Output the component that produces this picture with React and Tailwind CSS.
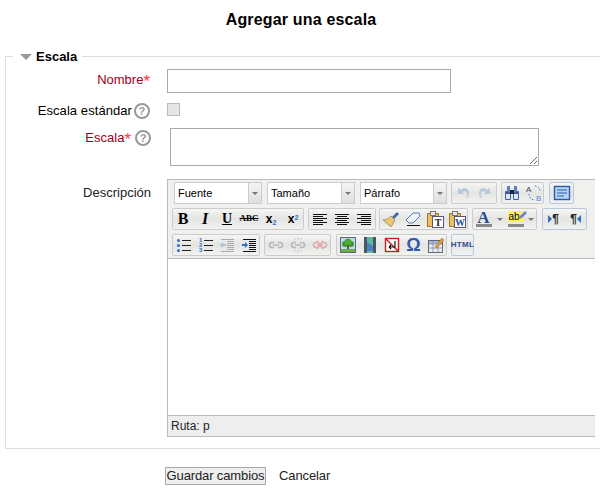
// ─── Agregar una escala form ───────────────────────────────────────────────────
const FONT = "font-['Liberation_Sans',Arial,sans-serif]";
const SERIF = "font-['Liberation_Serif',serif]";

const Help = () => (
  <span className="inline-flex h-4 w-4 shrink-0 items-center justify-center rounded-full border-2 border-[#999] bg-white text-[11px] font-bold leading-none text-[#999]">?</span>
);

const Star = () => <span className="relative top-[3px] text-[17px] leading-[0] text-[#f33]">*</span>;

const Caret = () => <span className="border-x-[3px] border-t-[3px] border-x-transparent border-t-[#777]" />;

const Select = ({ label, cls }) => (
  <div className={`flex h-[22px] border border-[#ccc] bg-white ${cls}`}>
    <span className="flex-1 pl-[3px] text-[11px] leading-[20px] text-black">{label}</span>
    <span className="flex w-[13px] items-center justify-center border-l border-[#ccc] bg-gradient-to-b from-[#f4f4f2] to-[#dfdfdd]">
      <Caret />
    </span>
  </div>
);

const Group = ({ children, cls, blue }) => (
  <div className={`flex h-[22px] shrink-0 items-center justify-center rounded-[2px] border bg-gradient-to-b from-[#f6f6f4] via-[#e4e4e2] to-[#f2f2f0] ${blue ? 'border-[#b8c8e0]' : 'border-[#ccc]'} ${cls}`}>{children}</div>
);

const Btn = ({ children, cls = 'w-[22px]' }) => (
  <div className={`flex h-[20px] shrink-0 items-center justify-center ${cls}`}>{children}</div>
);

const Ico = ({ children }) => <svg width="18" height="18" viewBox="0 0 18 18">{children}</svg>;

const Lines = ({ a }) => (
  <Ico>
    {[3, 5, 7, 9, 11, 13].map((y, i) => {
      const l = i % 2 === 0 ? 14 : 10;
      const x = a === 'left' ? 2 : a === 'center' ? (18 - l) / 2 : 16 - l;
      return <rect key={y} x={x} y={y + 1} width={l} height="1" fill="#111" />;
    })}
  </Ico>
);

const List = ({ num }) => (
  <Ico>
    {[4, 9, 14].map((y, i) => (
      <g key={y}>
        {num
          ? <text x="3" y={y + 2} fontSize="6" fontWeight="bold" fontFamily="Liberation Sans" fill="#2f6fc0">{i + 1}</text>
          : <rect x="3" y={y - 1} width="3" height="3" rx="1.5" fill="#2f6fc0" />}
        <rect x="8" y={y} width="9" height="1" fill="#222" />
      </g>
    ))}
  </Ico>
);

const Indent = ({ dim }) => (
  <Ico>
    {[3, 5, 7, 9, 11, 13, 15].map((y) => (
      <rect key={y} x={y === 3 || y === 15 ? 3 : 9} y={y} width={y === 3 || y === 15 ? 13 : 7} height="1" fill={dim ? '#aaa' : '#111'} />
    ))}
    <path d={dim ? 'M2 9l3-3v2h3v2H5v2z' : 'M8 9 5 6v2H2v2h3v2z'} fill={dim ? '#a8c0dc' : '#2f6fc0'} />
  </Ico>
);

const Link = ({ broken, red }) => (
  <Ico>
    <path d="M7 6.5H5a2.5 2.5 0 0 0 0 5h2M11 6.5h2a2.5 2.5 0 0 1 0 5h-2M6 9h6" fill="none" stroke={red ? '#e0b0b0' : '#b4b8c0'} strokeWidth="1.6" />
    {broken && <path d="M9 1v3M9 14v3M5 2l2 2M13 2l-2 2M5 16l2-2M13 16l-2-2" stroke="#c4c8cc" />}
    {red && <path d="M6 5l6 8M12 5l-6 8" stroke="#e8a0a0" strokeWidth="1.4" />}
  </Ico>
);

const Clip = ({ ch }) => (
  <Ico>
    <rect x="1.5" y="3.5" width="11" height="13" fill="#ecc060" stroke="#9a7a30" />
    <rect x="4.5" y="1.5" width="5" height="4" fill="#e8e8e8" stroke="#777" />
    <rect x="6.5" y="6.5" width="11" height="11" fill="#fff" stroke="#557" />
    <text x="12" y="15.5" textAnchor="middle" fontSize="10" fontWeight="bold" fontFamily="Liberation Serif" fill={ch === 'W' ? '#1f4fa8' : '#222'}>{ch}</text>
  </Ico>
);

export default function App() {
  return (
    <div className={`${FONT} h-[488px] w-[600px] overflow-hidden bg-white text-[13px] text-[#222]`}>
      <h2 className="pl-[2px] pt-[10px] text-center text-[16px] font-bold leading-[19px] tracking-[0.17px] text-black">Agregar una escala</h2>

      <fieldset className="ml-[5px] mt-[20px] h-[400px] w-[620px] border border-[#ddd]">
        <legend className="ml-[7px] flex items-center pl-[7px] pr-[5px] text-[13px] font-bold leading-[15px] text-black">
          <span className="mr-[4px] border-x-[6px] border-t-[6px] border-x-transparent border-t-[#999]" />
          Escala
        </legend>

        {/* Nombre */}
        <div className="mt-[5px] flex">
          <label className="w-[144px] pt-[1px] text-right leading-[19px] text-[#a00018]">Nombre<Star /></label>
          <input className="ml-[17px] h-[24px] w-[284px] border border-[#aaa] bg-white" />
        </div>

        {/* Escala estándar */}
        <div className="mt-[10px] flex h-[16px]">
          <label className="flex w-[144px] items-center justify-end gap-[2px] tracking-[0.07px] text-black">Escala estándar <Help /></label>
          <input type="checkbox" disabled className="ml-[17px] h-[13px] w-[13px] appearance-none border border-[#bbb] bg-[#e6e6e6]" />
        </div>

        {/* Escala */}
        <div className="mt-[9px] flex">
          <label className="mt-[2px] flex h-[16px] w-[145px] items-center justify-end gap-[4px] text-[#a00018]"><span>Escala<Star /></span><Help /></label>
          <textarea className="ml-[19px] h-[38px] w-[369px] border border-[#aaa] bg-white" />
        </div>

        {/* Descripción + editor */}
        <div className="mt-[13px] flex">
          <label className="w-[145px] pt-[4px] text-right">Descripción</label>
          <div className="ml-[16px] flex h-[258px] w-[428px] shrink-0 flex-col border-y border-l border-[#bbb] bg-[#f0f0ee]">
            <div className="flex h-[79px] shrink-0 flex-col gap-[4px] border-b border-[#bbb] pl-[4px] pt-[2px]">
              <div className="flex h-[22px] items-center">
                <Select label="Fuente" cls="ml-[2px] mr-[5px] w-[88px]" />
                <Select label="Tamaño" cls="mr-[5px] w-[88px]" />
                <Select label="Párrafo" cls="mr-[4px] w-[87px]" />
                <Group cls="mr-[4px] w-[46px]">
                  <Btn><Ico><path d="M4 4v6h6L8 8c3-2 6 0 5 4l-1 3c4-3 4-10-1-11-2 0-3 1-4 2z" fill="#b6c8dc" /></Ico></Btn>
                  <Btn><Ico><path d="M14 4v6H8l2-2c-3-2-6 0-5 4l1 3c-4-3-4-10 1-11 2 0 3 1 4 2z" fill="#b6c8dc" /></Ico></Btn>
                </Group>
                <Group cls="mr-[5px] w-[43px]">
                  <Btn>
                    <Ico>
                      <rect x="2" y="7" width="6" height="9" rx="1" fill="#3a5f9f" />
                      <rect x="10" y="7" width="6" height="9" rx="1" fill="#3a5f9f" />
                      <rect x="4" y="2" width="3" height="6" fill="#5a7fbf" />
                      <rect x="11" y="2" width="3" height="6" fill="#5a7fbf" />
                      <rect x="7" y="6" width="4" height="4" fill="#223" />
                      <rect x="3" y="10" width="4" height="5" fill="#dde6f4" />
                      <rect x="11" y="10" width="4" height="5" fill="#dde6f4" />
                    </Ico>
                  </Btn>
                  <Btn>
                    <Ico>
                      <path d="M4 10c0 3 2 6 6 6" fill="none" stroke="#3a7ae0" strokeDasharray="1.5 1.5" />
                      <path d="M10 2c3 0 5 2 5 6" fill="none" stroke="#3a7ae0" strokeDasharray="1.5 1.5" />
                      <text x="1" y="8" fontSize="8" fontFamily="Liberation Sans" fill="#446">A</text>
                      <text x="11" y="17" fontSize="8" fontFamily="Liberation Sans" fill="#4a8ae0">B</text>
                    </Ico>
                  </Btn>
                </Group>
                <Group blue cls="w-[25px]">
                  <Btn><Ico><rect x="1.5" y="2.5" width="15" height="13" fill="#b8d4f4" stroke="#2f5aa8" strokeWidth="1.4" /><path d="M4 6h10M4 9h10M4 12h7" stroke="#2f5aa8" /></Ico></Btn>
                </Group>
              </div>

              <div className="flex h-[22px] items-center">
                <Group cls="mr-[4px] w-[132px]">
                  <Btn><span className={`${SERIF} text-[16px] font-bold leading-none text-black`}>B</span></Btn>
                  <Btn><span className={`${SERIF} text-[16px] font-bold italic leading-none text-black`}>I</span></Btn>
                  <Btn><span className={`${SERIF} text-[14px] font-bold leading-none text-black underline`}>U</span></Btn>
                  <Btn><span className={`${SERIF} text-[9px] font-bold text-black line-through`}>ABC</span></Btn>
                  <Btn><span className="text-[12px] font-bold text-black">x<sub className="text-[7px] text-[#2f6fc0]">2</sub></span></Btn>
                  <Btn><span className="text-[12px] font-bold text-black">x<sup className="text-[7px] text-[#2f6fc0]">2</sup></span></Btn>
                </Group>
                <Group cls="mr-[3px] w-[68px]">
                  <Btn><Lines a="left" /></Btn>
                  <Btn><Lines a="center" /></Btn>
                  <Btn><Lines a="right" /></Btn>
                </Group>
                <Group cls="mr-[4px] w-[89px]">
                  <Btn>
                    <Ico>
                      <path d="M10 7l5-5 2 2-5 5z" fill="#3a66b0" />
                      <path d="M9 6l4 4-4 7-8-7c4 0 6-2 8-4z" fill="#e8c870" stroke="#8a7030" strokeWidth=".6" />
                    </Ico>
                  </Btn>
                  <Btn><Ico><path d="M2 10l7-7h6l1 3-7 7H5z" fill="#eef2fa" stroke="#5a7ab0" /><rect x="3" y="15" width="13" height="1" fill="#111" /></Ico></Btn>
                  <Btn><Clip ch="T" /></Btn>
                  <Btn><Clip ch="W" /></Btn>
                </Group>
                <Group cls="mr-[5px] w-[65px]">
                  <Btn cls="w-[21px]"><span className="flex flex-col items-center"><span className={`${SERIF} text-[17px] font-bold leading-[13px] text-[#2b4f94]`}>A</span><span className="h-[3px] w-[16px] bg-[#888]" /></span></Btn>
                  <Btn cls="w-[11px]"><Caret /></Btn>
                  <Btn cls="w-[21px]">
                    <span className="relative flex flex-col items-center">
                      <span className="w-[16px] bg-[#fff060] pl-[1px] text-[10px] leading-[11px] text-black">ab</span>
                      <svg className="absolute left-[10px] top-[-1px]" width="9" height="10" viewBox="0 0 9 10"><path d="M1 9l1-3 5-5 2 2-5 5z" fill="#6a8ac0" /></svg>
                      <span className="mt-[2px] h-[3px] w-[16px] bg-[#888]" />
                    </span>
                  </Btn>
                  <Btn cls="w-[10px]"><Caret /></Btn>
                </Group>
                <Group blue cls="w-[45px]">
                  <Btn><span className="flex items-center text-[12px] font-bold leading-none text-[#222]"><span className="border-y-[4px] border-l-[4px] border-y-transparent border-l-[#2f6fc0]" />¶</span></Btn>
                  <Btn><span className="flex items-center text-[12px] font-bold leading-none text-[#222]">¶<span className="border-y-[4px] border-r-[4px] border-y-transparent border-r-[#2f6fc0]" /></span></Btn>
                </Group>
              </div>

              <div className="flex h-[22px] items-center">
                <Group cls="mr-[4px] w-[88px]">
                  <Btn><List /></Btn>
                  <Btn><List num /></Btn>
                  <Btn><Indent dim /></Btn>
                  <Btn><Indent /></Btn>
                </Group>
                <Group cls="mr-[5px] w-[67px]">
                  <Btn><Link /></Btn>
                  <Btn><Link broken /></Btn>
                  <Btn><Link red /></Btn>
                </Group>
                <Group cls="mr-[4px] w-[111px]">
                  <Btn>
                    <Ico>
                      <rect x="1.5" y="1.5" width="15" height="15" fill="#bcd8f4" stroke="#667" />
                      <circle cx="6" cy="8" r="3" fill="#3a9a30" />
                      <circle cx="12" cy="8" r="3" fill="#3a9a30" />
                      <circle cx="9" cy="6" r="3.5" fill="#4aaa38" />
                      <rect x="8" y="9" width="2" height="5" fill="#7a5020" />
                      <rect x="2" y="13" width="14" height="3" fill="#6ab04a" />
                    </Ico>
                  </Btn>
                  <Btn>
                    <Ico>
                      <rect x="3" y="1" width="12" height="16" fill="#5fb8a0" />
                      <path d="M6 6l6 4v5H6z" fill="#4a80c0" />
                      <path d="M3 1h3v16H3zM12 1h3v16h-3z" fill="#4a5560" />
                    </Ico>
                  </Btn>
                  <Btn>
                    <Ico>
                      <rect x="2.5" y="2.5" width="13" height="13" fill="#fff" stroke="#c02020" strokeWidth="1.4" />
                      <path d="M3 3l12 12" stroke="#c02020" strokeWidth="1.4" />
                      <path d="M12 5v6H6M6 11l2-2M6 11l2 2" fill="none" stroke="#111" strokeWidth="1.2" />
                    </Ico>
                  </Btn>
                  <Btn><span className="text-[18px] font-bold leading-none text-[#2f5aa8]">Ω</span></Btn>
                  <Btn>
                    <Ico>
                      <rect x="1.5" y="4.5" width="14" height="12" fill="#e8eef8" stroke="#667" />
                      <rect x="2" y="5" width="13" height="3" fill="#9ab8d8" />
                      <path d="M2 8h13M2 12h13M6 5v11M11 5v11" stroke="#99a" />
                      <path d="M8 11l7-9 2 2-7 8z" fill="#e0a040" stroke="#a06020" strokeWidth=".5" />
                    </Ico>
                  </Btn>
                </Group>
                <Group blue cls="w-[23px]">
                  <span className="text-[8px] font-bold tracking-[0.3px] text-[#2b4f94]">HTML</span>
                </Group>
              </div>
            </div>

            <div className="flex-1 border-b border-[#bbb] bg-white" />
            <div className="h-[20px] shrink-0 bg-[#eee] pl-[3px] text-[12px] leading-[21px] text-[#222]">Ruta: p</div>
          </div>
        </div>
      </fieldset>

      <div className="mt-[17px] flex items-center pl-[165px]">
        <button className="h-[18px] w-[101px] border border-[#aaa] bg-[#eee] text-center text-[13px] leading-[15px] tracking-[-0.12px] text-[#222]">Guardar cambios</button>
        <span className="ml-[13px] mt-[1px] text-[13px] leading-[18px] tracking-[-0.1px] text-[#222]">Cancelar</span>
      </div>
    </div>
  );
}
